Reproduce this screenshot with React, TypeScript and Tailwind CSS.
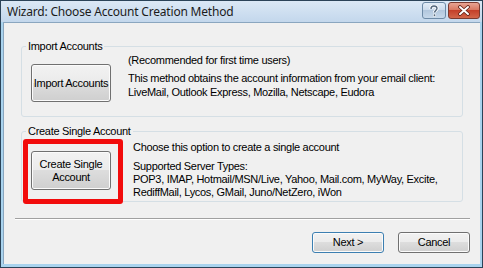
import { ReactNode } from "react";

function WinButton({
  children,
  className = "",
  isDefault = false,
}: {
  children: ReactNode;
  className?: string;
  isDefault?: boolean;
}) {
  return (
    <button
      className={`rounded-[3px] border ${
        isDefault ? "border-[#3c7fb1]" : "border-[#707070]"
      } bg-[linear-gradient(to_bottom,#f2f2f2_0%,#ebebeb_50%,#dddddd_50%,#cfcfcf_100%)] leading-[13px] text-black shadow-[inset_0_0_0_1px_#fbfbfb] ${className}`}
    >
      {children}
    </button>
  );
}

function GroupBox({
  title,
  children,
  className = "",
}: {
  title: string;
  children: ReactNode;
  className?: string;
}) {
  return (
    <fieldset className={`rounded-[3px] border border-[#d5dfe5] pr-[8px] pl-[9px] ${className}`}>
      <legend className="-ml-[5px] px-[2px] leading-[13px]">{title}</legend>
      {children}
    </fieldset>
  );
}

export default function App() {
  return (
    <div
      className="h-[268px] w-[483px] overflow-hidden border border-[#2b4358] bg-[#a9d3ee] text-[11px] tracking-[-0.3px] text-black"
      style={{ fontFamily: '"Liberation Sans", Arial, sans-serif' }}
    >
      <div className="flex h-[21px] items-center justify-between bg-[linear-gradient(to_bottom,#dbe8f5,#c3d7ec)] pl-[6px] pr-[2px]">
        <span
          className="text-[12px] tracking-[-0.2px] text-[#1b1b1b]"
          style={{ fontFamily: '"Noto Sans", "Open Sans", sans-serif' }}
        >
          Wizard: Choose Account Creation Method
        </span>
        <div className="flex gap-[2px] self-start pt-[1px]">
          <div className="flex h-[17px] w-[24px] items-center justify-center rounded-[3px] border border-[#6d8aa6] bg-[linear-gradient(to_bottom,#e3edf7_0%,#c9d9ea_50%,#b2c7dd_50%,#c6d8ea_100%)]">
            <svg width="10" height="12" viewBox="0 0 10 12">
              <path
                d="M2 4 C2 1.5 3.5 1 5 1 C6.8 1 8 2 8 3.6 C8 5.2 5.5 5.6 5.5 7.6"
                fill="none"
                stroke="#ffffff"
                strokeWidth="3.2"
              />
              <path
                d="M2 4 C2 1.5 3.5 1 5 1 C6.8 1 8 2 8 3.6 C8 5.2 5.5 5.6 5.5 7.6"
                fill="none"
                stroke="#54687d"
                strokeWidth="1.4"
              />
              <rect x="4.3" y="9" width="2.4" height="2.4" fill="#54687d" stroke="#fff" strokeWidth="0.6" />
            </svg>
          </div>
          <div className="flex h-[17px] w-[32px] items-center justify-center rounded-[3px] border border-[#7b3a30] bg-[linear-gradient(to_bottom,#e8a493_0%,#d7735c_50%,#c4402a_50%,#d2664a_100%)]">
            <svg width="14" height="11" viewBox="0 0 14 11">
              <path d="M3 2 L11 9 M11 2 L3 9" stroke="#5e1e14" strokeWidth="3.6" strokeLinecap="round" />
              <path d="M3 2 L11 9 M11 2 L3 9" stroke="#ffffff" strokeWidth="2" strokeLinecap="round" />
            </svg>
          </div>
        </div>
      </div>

      <div className="mx-[2px] flex h-[242px] flex-col border-l border-t border-[#8aa6bf] bg-[#f0f0f0] pt-[17px] pl-[17px] pr-[10px]">
        <div className="pr-[7px]">
          <GroupBox title="Import Accounts" className="pb-[14px]">
            <div className="flex gap-[17px]">
              <WinButton className="mt-[11px] h-[38px] w-[80px] shrink-0">Import Accounts</WinButton>
              <div className="leading-[14px]">
                <p>(Recommended for first time users)</p>
                <p className="mt-[4px]">
                  This method obtains the account information from your email client:
                  <br />
                  LiveMail, Outlook Express, Mozilla, Netscape, Eudora
                </p>
              </div>
            </div>
          </GroupBox>
        </div>

        <div className="mt-[8px] pr-[7px]">
          <GroupBox title="Create Single Account" className="pb-[2px]">
            <div className="flex items-start gap-[22px]">
              <div className="relative mt-[13px] flex shrink-0">
                <WinButton className="h-[39px] w-[80px]">
                  Create Single
                  <br />
                  Account
                </WinButton>
                <div className="pointer-events-none absolute -top-[12px] -left-[8px] -right-[12px] -bottom-[14px] rounded-[3px] border-[5px] border-[#f20c0c]" />
              </div>
              <div className="mt-[3px] leading-[13px]">
                <p>Choose this option to create a single account</p>
                <p className="mt-[6px]">Supported Server Types:</p>
                <p>
                  POP3, IMAP, Hotmail/MSN/Live, Yahoo, Mail.com, MyWay, Excite,
                  <br />
                  RediffMail, Lycos, GMail, Juno/NetZero, iWon
                </p>
              </div>
            </div>
          </GroupBox>
        </div>

        <div className="mt-[16px] -ml-[6px] h-[2px] border-t border-b border-t-[#a0a0a0] border-b-white" />

        <div className="mt-[12px] flex justify-end gap-[14px]">
          <WinButton isDefault className="h-[21px] w-[72px]">
            Next &gt;
          </WinButton>
          <WinButton className="h-[21px] w-[72px]">Cancel</WinButton>
        </div>
      </div>
    </div>
  );
}
